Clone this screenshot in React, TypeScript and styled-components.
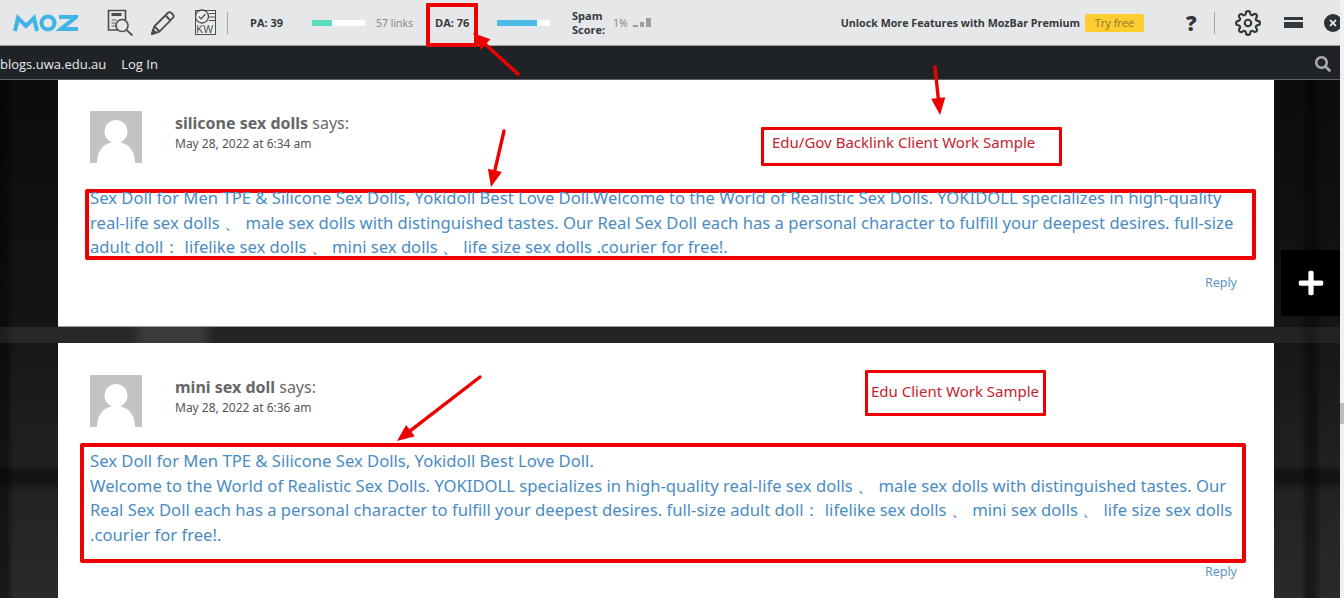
import React from "react";
import styled, { createGlobalStyle } from "styled-components";
import { FiSettings } from "react-icons/fi";
import { FaSearch, FaPlus, FaTimes } from "react-icons/fa";

const GlobalStyle = createGlobalStyle`
  html, body { margin: 0; padding: 0; height: 100%; overflow: hidden; background: #141414; }
  #root { height: 598px; }
`;

const Shell = styled.div`
  position: relative;
  width: 1344px;
  height: 598px;
  overflow: hidden;
  display: flex;
`;

const Browser = styled.div`
  width: 1340px;
  height: 598px;
  display: flex;
  flex-direction: column;
`;

const ScrollTrack = styled.div`
  flex: 1;
  background: #f1f1f1;
  position: relative;
`;

const ScrollThumb = styled.div`
  position: absolute;
  top: 403px;
  left: 0;
  right: 0;
  height: 21px;
  background: #bdbdbd;
`;

const Toolbar = styled.header`
  height: 46px;
  flex: none;
  box-sizing: border-box;
  background: #e6e7e8;
  border-bottom: 1px solid #9a9c9e;
  display: flex;
  align-items: center;
  overflow: hidden;
  font-family: "Open Sans", sans-serif;
  font-size: 11px;
  color: #33393d;
`;

const MozLogo = styled.svg`
  width: 65px;
  height: 18px;
  margin-left: 13px;
  flex: none;
`;

const ToolIcon = styled.span<{ $w: number; $ml: number }>`
  width: ${(p) => p.$w}px;
  margin-left: ${(p) => p.$ml}px;
  height: 28px;
  flex: none;
  display: flex;
  align-items: center;
`;

const Divider = styled.span<{ $ml: number }>`
  width: 1px;
  height: 22px;
  margin-left: ${(p) => p.$ml}px;
  background: #a3a5a7;
  flex: none;
`;

const Metric = styled.strong<{ $w: number; $ml: number }>`
  width: ${(p) => p.$w}px;
  margin-left: ${(p) => p.$ml}px;
  font-weight: 700;
  flex: none;
  white-space: nowrap;
`;

const Meter = styled.span<{ $ml: number }>`
  width: 53px;
  height: 6px;
  margin-left: ${(p) => p.$ml}px;
  background: #fff;
  flex: none;
  display: block;
`;

const MeterFill = styled.span<{ $color: string; $pct: number }>`
  display: block;
  height: 100%;
  width: ${(p) => p.$pct}%;
  background: ${(p) => p.$color};
`;

const Muted = styled.span<{ $ml: number; $w: number }>`
  margin-left: ${(p) => p.$ml}px;
  width: ${(p) => p.$w}px;
  font-size: 10.5px;
  color: #7d8184;
  white-space: nowrap;
  flex: none;
`;

const SpamLabel = styled.strong`
  margin-left: 22px;
  width: 41px;
  font-weight: 700;
  line-height: 14px;
  flex: none;
`;

const SpamBars = styled.span`
  display: flex;
  align-items: flex-end;
  gap: 2px;
  margin-left: 6px;
  height: 9px;
`;

const SpamBar = styled.span<{ $h: number }>`
  width: 4.5px;
  height: ${(p) => p.$h}px;
  background: #9a9ea1;
`;

const Promo = styled.strong`
  margin-left: auto;
  font-weight: 700;
  font-size: 10.7px;
  white-space: nowrap;
`;

const TryFree = styled.span`
  margin-left: 5px;
  width: 59px;
  height: 18px;
  border-radius: 2px;
  background: #fdcc2e;
  color: #8b7430;
  display: flex;
  align-items: center;
  justify-content: center;
  flex: none;
`;

const Help = styled.span`
  margin-left: 42px;
  width: 28px;
  font-size: 21px;
  font-weight: 800;
  color: #2f3539;
  flex: none;
`;

const Gear = styled.span`
  margin-left: 20px;
  display: flex;
  flex: none;
  color: #33393d;
`;

const Minimize = styled.span`
  display: block;
  margin-left: 23px;
  width: 19px;
  height: 8px;
  border-top: 3px solid #33393d;
  background: linear-gradient(#e6e7e8 0 2px, #33393d 2px);
  flex: none;
`;

const CloseButton = styled.span`
  margin-left: 21px;
  margin-right: -2px;
  width: 18px;
  height: 18px;
  border-radius: 50%;
  background: #2b3236;
  color: #e6e7e8;
  display: flex;
  align-items: center;
  justify-content: center;
  flex: none;
`;

const NavBar = styled.nav`
  height: 34px;
  flex: none;
  box-sizing: border-box;
  padding-top: 2px;
  background: #1f2327;
  border-bottom: 1px solid #5f6265;
  display: flex;
  align-items: center;
  gap: 15px;
  color: #e8e9ea;
  font-family: "Open Sans", sans-serif;
  font-size: 13px;
`;

const NavSearch = styled.span`
  margin-left: auto;
  margin-right: 9px;
  display: flex;
  color: #a9abad;
`;

const Page = styled.main`
  flex: 1;
  min-height: 0;
  overflow: hidden;
  padding: 0 66px 0 58px;
  display: flex;
  flex-direction: column;
  gap: 16px;
  background:
    linear-gradient(90deg, rgba(255, 255, 255, 0.08), rgba(255, 255, 255, 0.08) 130px, rgba(255, 255, 255, 0.16) 145px 200px, rgba(255, 255, 255, 0.06) 215px) 0 247px / 100% 16px no-repeat,
    linear-gradient(90deg, rgba(0, 0, 0, 0.45) 0 6px, transparent 14px 1300px, rgba(0, 0, 0, 0.4) 1308px 1314px, transparent 1322px),
    linear-gradient(180deg, transparent 0 385px, rgba(0, 0, 0, 0.45) 392px 400px, transparent 412px),
    linear-gradient(180deg, #0c0c0c 0%, #141414 45%, #1f1f1f 70%, #2a2a2a 100%);
`;

const Card = styled.article<{ $h: number; $pt: number; $edge?: boolean }>`
  height: ${(p) => p.$h}px;
  flex: none;
  box-sizing: border-box;
  background: #fff;
  padding: ${(p) => p.$pt}px 37px 0 32px;
  border-bottom: ${(p) => (p.$edge ? "1px solid #9d9d9d" : "none")};
  font-family: "Noto Sans", sans-serif;
`;

const CommentHead = styled.div`
  display: flex;
  gap: 33px;
  height: 52px;
`;

const Avatar = styled.svg`
  width: 52px;
  height: 52px;
  display: block;
  flex: none;
`;

const Meta = styled.div`
  padding-top: 1px;
`;

const Author = styled.div`
  font-size: 16px;
  line-height: 22px;
  color: #6a6a6a;
  b { font-weight: 700; color: #666; }
`;

const Posted = styled.div`
  font-size: 12px;
  line-height: 20px;
  color: #555;
`;

const Highlight = styled.div<{ $ml: number; $mt: number; $w: number; $h: number; $pl: number }>`
  box-sizing: border-box;
  margin: ${(p) => p.$mt}px 0 0 ${(p) => p.$ml}px;
  width: ${(p) => p.$w}px;
  height: ${(p) => p.$h}px;
  padding-left: ${(p) => p.$pl}px;
  border: 4px solid #ee0000;
  border-radius: 2px;
`;

const CommentText = styled.div<{ $mt: number }>`
  margin-top: ${(p) => p.$mt}px;
`;

const CommentLine = styled.p`
  margin: 0;
  font-size: 16.64px;
  line-height: 24.5px;
  color: #4a8cc2;
  white-space: nowrap;
`;

const Reply = styled.div<{ $mt: number }>`
  margin-top: ${(p) => p.$mt}px;
  text-align: right;
  font-size: 12.5px;
  line-height: 18px;
  color: #5c93c4;
`;

const Callout = styled.div<{ $x: number; $y: number; $w: number; $h: number; $pl: number; $pb: number }>`
  position: absolute;
  left: ${(p) => p.$x}px;
  top: ${(p) => p.$y}px;
  width: ${(p) => p.$w}px;
  height: ${(p) => p.$h}px;
  box-sizing: border-box;
  display: flex;
  align-items: center;
  border: 3px solid #ee0000;
  border-radius: 1px;
  background: #fff;
  padding: 0 0 ${(p) => p.$pb}px ${(p) => p.$pl}px;
  font-family: "Noto Sans", sans-serif;
  font-size: 15px;
  color: #c6232c;
  white-space: nowrap;
`;

const DaBox = styled.div`
  position: absolute;
  left: 426px;
  top: 3px;
  width: 52px;
  height: 44px;
  box-sizing: border-box;
  border: 4px solid #ee0000;
  border-radius: 1px;
`;

const PlusTab = styled.div`
  position: absolute;
  left: 1281px;
  top: 250px;
  width: 59px;
  height: 66px;
  background: #000;
  color: #fff;
  display: flex;
  align-items: center;
  justify-content: center;
`;

const ArrowLayer = styled.svg`
  position: absolute;
  inset: 0;
  width: 1344px;
  height: 598px;
  pointer-events: none;
`;

const Arrow = ({ x1, y1, x2, y2, head = 17 }: { x1: number; y1: number; x2: number; y2: number; head?: number }) => {
  const a = Math.atan2(y2 - y1, x2 - x1);
  const bx = x2 - Math.cos(a) * head;
  const by = y2 - Math.sin(a) * head;
  const nx = -Math.sin(a) * head * 0.42;
  const ny = Math.cos(a) * head * 0.42;
  return (
    <g>
      <line x1={x1} y1={y1} x2={bx} y2={by} stroke="#ee0000" strokeWidth={3.4} strokeLinecap="round" />
      <polygon points={`${x2},${y2} ${bx + nx},${by + ny} ${bx - nx},${by - ny}`} fill="#ee0000" />
    </g>
  );
};

const AvatarPic = () => (
  <Avatar viewBox="0 0 52 52">
    <rect width="52" height="52" fill="#c3c3c3" />
    <circle cx="26" cy="20.5" r="11.5" fill="#fff" />
    <path d="M7 52c0-13 7-21 19-21s19 8 19 21z" fill="#fff" />
  </Avatar>
);

const DocSearchIcon = () => (
  <svg width="26" height="27" viewBox="0 0 26 27" fill="none" stroke="#4a4d50">
    <path d="M11 21H1.5V1.5h17V11" strokeWidth="1.6" />
    <path d="M4.5 5.5h10" strokeWidth="3" />
    <path d="M4.5 11h5M4.5 14h4M4.5 17h4" stroke="#8a8c8e" strokeWidth="1.3" />
    <circle cx="15" cy="16.5" r="6" strokeWidth="1.6" />
    <path d="M19.5 21l6 5.5" strokeWidth="1.8" />
  </svg>
);

const PencilIcon = () => (
  <svg width="26" height="26" viewBox="0 0 26 26" fill="none" stroke="#4a4d50" strokeWidth="1.8" strokeLinejoin="round">
    <path d="M2 24l2.2-7.5L17.8 3a2.6 2.6 0 0 1 3.6 0l1.4 1.4a2.6 2.6 0 0 1 0 3.6L9.4 21.6z" />
    <path d="M15.5 5.5l5 5M4.5 16.5l5 5" />
    <path d="M2 24l1-4 3 3z" fill="#4a4d50" />
  </svg>
);

const KwIcon = () => (
  <svg width="23" height="27" viewBox="0 0 23 27" fill="none" stroke="#4a4d50">
    <rect x="1.5" y="1.5" width="20" height="24" fill="#eceded" />
    <circle cx="8" cy="7.5" r="6.5" fill="#eceded" strokeWidth="1.3" />
    <path d="M4.8 7.5l2.4 2.4 4-4.6" strokeWidth="1.3" />
    <path d="M15 4.5h6M15 8h6M15 11.5h6" />
    <text x="2.2" y="24" fontFamily="Liberation Sans" fontSize="10.5" fill="#4a4d50" stroke="none">KW</text>
  </svg>
);

const comment1 = [
  "Sex Doll for Men TPE & Silicone Sex Dolls, Yokidoll Best Love Doll.Welcome to the World of Realistic Sex Dolls. YOKIDOLL specializes in high-quality",
  "real-life sex dolls 、 male sex dolls with distinguished tastes. Our Real Sex Doll each has a personal character to fulfill your deepest desires. full-size",
  "adult doll： lifelike sex dolls 、 mini sex dolls 、 life size sex dolls .courier for free!.",
];

const comment2 = [
  "Sex Doll for Men TPE & Silicone Sex Dolls, Yokidoll Best Love Doll.",
  "Welcome to the World of Realistic Sex Dolls. YOKIDOLL specializes in high-quality real-life sex dolls 、 male sex dolls with distinguished tastes. Our",
  "Real Sex Doll each has a personal character to fulfill your deepest desires. full-size adult doll： lifelike sex dolls 、 mini sex dolls 、 life size sex dolls",
  ".courier for free!.",
];

export default function App() {
  return (
    <Shell>
      <GlobalStyle />
      <Browser>
        <Toolbar>
          <MozLogo viewBox="0 0 65 18" fill="none" stroke="#3fb4e5" strokeWidth="4">
            <path d="M2 17L5 4l8 8 8-8 3 13" />
            <circle cx="35" cy="9" r="6.5" />
            <path d="M46 3h17L48 15h17" />
          </MozLogo>
          <ToolIcon $w={26} $ml={29}><DocSearchIcon /></ToolIcon>
          <ToolIcon $w={26} $ml={17}><PencilIcon /></ToolIcon>
          <ToolIcon $w={23} $ml={18}><KwIcon /></ToolIcon>
          <Divider $ml={10} />
          <Metric $w={50} $ml={22}>PA: 39</Metric>
          <Meter $ml={12}><MeterFill $color="#5cdcc0" $pct={38} /></Meter>
          <Muted $ml={11} $w={37}>57 links</Muted>
          <Metric $w={51} $ml={22}>DA: 76</Metric>
          <Meter $ml={11}><MeterFill $color="#4dbbe8" $pct={76} /></Meter>
          <SpamLabel>Spam Score:</SpamLabel>
          <Muted $ml={0} $w={14}>1%</Muted>
          <SpamBars>
            <SpamBar $h={2} />
            <SpamBar $h={5} />
            <SpamBar $h={9} />
          </SpamBars>
          <Promo>Unlock More Features with MozBar Premium</Promo>
          <TryFree>Try free</TryFree>
          <Help>?</Help>
          <Divider $ml={0} />
          <Gear><FiSettings size={26} /></Gear>
          <Minimize />
          <CloseButton><FaTimes size={10} /></CloseButton>
        </Toolbar>
        <NavBar>
          <span>blogs.uwa.edu.au</span>
          <span>Log In</span>
          <NavSearch><FaSearch size={16} /></NavSearch>
        </NavBar>
        <Page>
          <Card $h={247} $pt={31} $edge>
            <CommentHead>
              <AvatarPic />
              <Meta>
                <Author><b>silicone sex dolls</b> says:</Author>
                <Posted>May 28, 2022 at 6:34 am</Posted>
              </Meta>
            </CommentHead>
            <Highlight $ml={-5} $mt={26} $w={1171} $h={71} $pl={1}>
              <CommentText $mt={-7}>
                {comment1.map((line) => (
                  <CommentLine key={line}>{line}</CommentLine>
                ))}
              </CommentText>
            </Highlight>
            <Reply $mt={14}>Reply</Reply>
          </Card>
          <Card $h={260} $pt={32}>
            <CommentHead>
              <AvatarPic />
              <Meta>
                <Author><b>mini sex doll</b> says:</Author>
                <Posted>May 28, 2022 at 6:36 am</Posted>
              </Meta>
            </CommentHead>
            <Highlight $ml={-10} $mt={16} $w={1166} $h={120} $pl={6}>
              <CommentText $mt={2}>
                {comment2.map((line) => (
                  <CommentLine key={line}>{line}</CommentLine>
                ))}
              </CommentText>
            </Highlight>
            <Reply $mt={0}>Reply</Reply>
          </Card>
        </Page>
      </Browser>
      <ScrollTrack><ScrollThumb /></ScrollTrack>
      <DaBox />
      <Callout $x={761} $y={127} $w={301} $h={39} $pl={8} $pb={9}>Edu/Gov Backlink Client Work Sample</Callout>
      <Callout $x={865} $y={370} $w={181} $h={46} $pl={3} $pb={4}>Edu Client Work Sample</Callout>
      <PlusTab><FaPlus size={28} /></PlusTab>
      <ArrowLayer viewBox="0 0 1344 598">
        <Arrow x1={518} y1={74} x2={473} y2={33} />
        <Arrow x1={935} y1={67} x2={940} y2={115} />
        <Arrow x1={504} y1={131} x2={491} y2={187} />
        <Arrow x1={480} y1={377} x2={397} y2={441} />
      </ArrowLayer>
    </Shell>
  );
}
